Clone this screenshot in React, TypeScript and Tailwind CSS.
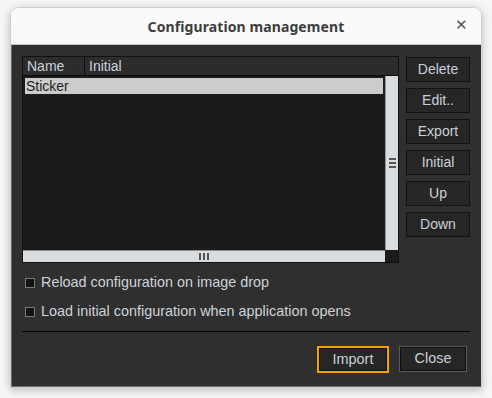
import React from 'react';

const sideButtons = ['Delete', 'Edit..', 'Export', 'Initial', 'Up', 'Down'];

const Checkbox = ({ label }: { label: string }) => (
  <div className="flex items-center h-[20px]">
    <span className="w-[10px] h-[10px] ml-[3px] border border-[#7a7a7a] bg-[#121212]" />
    <span className="ml-[6px] text-[14.4px] text-[#cdd3da]">{label}</span>
  </div>
);

const App: React.FC = () => {
  return (
    <div
      className="w-[492px] h-[398px] bg-[#f6f6f6] pt-[7px] pl-[10px]"
      style={{ fontFamily: '"Liberation Sans", Arial, sans-serif' }}
    >
      <div className="w-[472px] h-[381px] flex flex-col rounded-t-[9px] overflow-hidden shadow-[0_2px_8px_rgba(0,0,0,0.25)] border border-[#d0d0d0]">
        {/* title bar */}
        <div className="relative h-[37px] shrink-0 bg-[#fafafa] border-b border-[#c4c4c4] flex items-center justify-center">
          <span
            className="text-[14px] font-bold text-[#3d3d3d] tracking-[0.1px]"
            style={{ fontFamily: '"Noto Sans", "Open Sans", sans-serif' }}
          >
            Configuration management
          </span>
          <span className="absolute right-[13px] top-[9px] text-[15px] leading-none text-[#555]">✕</span>
        </div>

        {/* body */}
        <div className="flex-1 bg-[#2f2f2f] border-l border-b border-[#6e6e6e] pl-[10px] pr-[11px] pt-[11px] flex flex-col">
          <div className="flex gap-[7px]">
            {/* list */}
            <div className="w-[378px] h-[207px] border border-[#101010] bg-[#1b1b1b] grid grid-cols-[1fr_13px] grid-rows-[19px_1fr_12px]">
              <div className="col-span-2 flex bg-[#2c2c2c] border-b border-[#0c0c0c] text-[14px] leading-[18px] text-[#c8d2dc]">
                <div className="w-[62px] pl-[4px] border-r border-[#0c0c0c]">Name</div>
                <div className="pl-[4px]">Initial</div>
              </div>
              <div className="pt-[2px] pl-[2px] pr-[2px]">
                <div className="h-[16px] bg-[#cccccc] text-[14px] leading-[16px] text-[#1e1e1e] pl-[1px]">Sticker</div>
              </div>
              <div className="bg-[#d9dcdf] border-l border-[#9a9a9a] flex items-center justify-center">
                <div className="flex flex-col gap-[2px]">
                  <span className="block w-[7px] h-[2px] bg-[#555]" />
                  <span className="block w-[7px] h-[2px] bg-[#555]" />
                  <span className="block w-[7px] h-[2px] bg-[#555]" />
                </div>
              </div>
              <div className="bg-[#d9dcdf] border-t border-[#8a8a8a] flex items-center justify-center">
                <div className="flex gap-[2px]">
                  <span className="block w-[2px] h-[7px] bg-[#555]" />
                  <span className="block w-[2px] h-[7px] bg-[#555]" />
                  <span className="block w-[2px] h-[7px] bg-[#555]" />
                </div>
              </div>
              <div className="bg-[#1b1b1b]" />
            </div>

            {/* side buttons */}
            <div className="flex flex-col gap-[6px] pt-[1px]">
              {sideButtons.map((b) => (
                <button
                  key={b}
                  className="w-[64px] h-[25px] bg-[#262626] border border-[#121212] text-[14px] text-[#c8d0da]"
                >
                  {b}
                </button>
              ))}
            </div>
          </div>

          <div className="mt-[10px] flex flex-col gap-[9px]">
            <Checkbox label="Reload configuration on image drop" />
            <Checkbox label="Load initial configuration when application opens" />
          </div>

          <div className="mt-[9px] h-px bg-[#050505]" />

          <div className="mt-[14px] mr-[3px] flex justify-end gap-[10px]">
            <button className="w-[72px] h-[27px] border-2 border-[#f5a000] bg-[#262626] text-[14.4px] text-[#c8d0da]">
              <span className="flex items-center justify-center w-full h-full border border-[#121212]">Import</span>
            </button>
            <button className="w-[68px] h-[26px] border border-[#5a5a5a] bg-[#262626] text-[14.4px] text-[#c8d0da]">
              <span className="flex items-center justify-center w-full h-full border border-[#0e0e0e]">Close</span>
            </button>
          </div>
        </div>
      </div>
    </div>
  );
};

export default App;
